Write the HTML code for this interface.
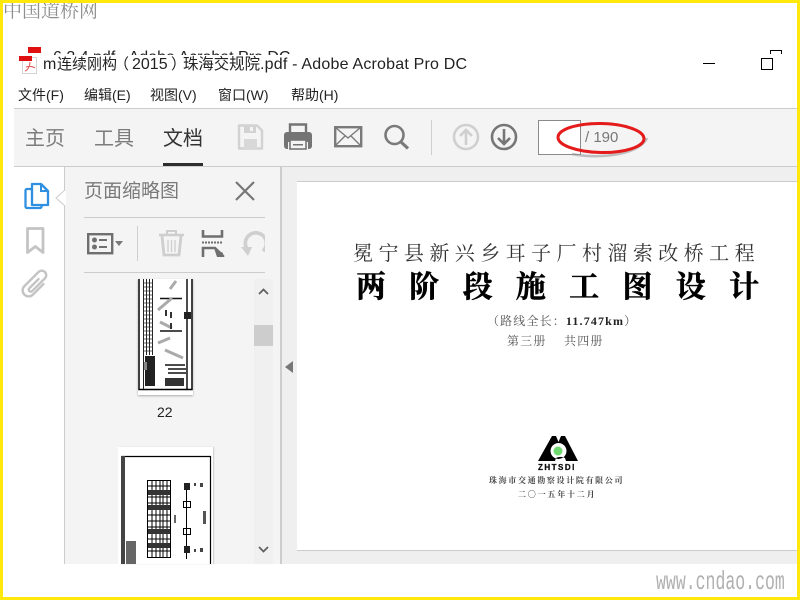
<!DOCTYPE html>
<html><head><meta charset="utf-8">
<style>
*{box-sizing:border-box}
html,body{margin:0;padding:0;width:800px;height:600px;overflow:hidden;background:#fff}
body{position:relative;font-family:"Liberation Sans","Noto Sans CJK SC",sans-serif;color:#222}
.a{position:absolute;white-space:nowrap;line-height:1}
.b{position:absolute}
svg{position:absolute;overflow:visible}
.s{font-family:"Liberation Serif","Noto Serif CJK SC",serif}
</style></head><body>
<!-- watermark -->
<div class="a s" style="left:3px;top:2px;font-size:19px;color:#8f8f8f">中国道桥网</div>
<!-- ghost title -->
<div class="a" style="left:53px;top:50px;font-size:16px;color:#222;height:5px;overflow:hidden;line-height:16px">6.3.4.pdf - Adobe Acrobat Pro DC</div>
<svg style="left:0;top:0" width="800" height="600">
<rect x="28" y="47" width="13" height="6" fill="#e01010"/>
<rect x="22.500" y="57.500" width="14" height="16" fill="#fff" stroke="#d4d4d4"/>
<rect x="19" y="56" width="13" height="5" fill="#e01010"/>
<path d="M30 62c0 4-2 8-5 9M26 67c3-1 6-1 9 1" stroke="#e05050" fill="none"/>
</svg>
<div class="a" style="left:43px;top:57px;font-size:16px;color:#222">m</div>
<div class="a" style="left:57px;top:57px;font-size:15px;color:#222">连续刚构</div>
<div class="a" style="left:114px;top:57px;font-size:15px;color:#222">（</div>
<div class="a" style="left:132px;top:57px;font-size:16px;color:#222">2015</div>
<div class="a" style="left:171px;top:57px;font-size:15px;color:#222">）</div>
<div class="a" style="left:183px;top:57px;font-size:15.400px;color:#222">珠海交规院</div>
<div class="a" style="left:260px;top:57px;font-size:16px;letter-spacing:.2px;color:#222">.pdf - Adobe Acrobat Pro DC</div>
<div class="b" style="left:703px;top:63px;width:12px;height:1px;background:#000"></div>
<div class="b" style="left:761px;top:58px;width:12px;height:12px;border:1px solid #000"></div>
<div class="b" style="left:770px;top:50px;width:12px;height:4px;border:1px solid #000;border-bottom:0"></div>
<div class="a" style="left:18px;top:88px;font-size:14px">文件(F)</div>
<div class="a" style="left:84px;top:88px;font-size:14px">编辑(E)</div>
<div class="a" style="left:150px;top:88px;font-size:14px">视图(V)</div>
<div class="a" style="left:218px;top:88px;font-size:14px">窗口(W)</div>
<div class="a" style="left:291px;top:88px;font-size:14px">帮助(H)</div>
<!-- toolbar -->
<div class="b" style="left:14px;top:108px;width:783px;height:59px;background:#f4f4f4;border-top:1px solid #ccc;border-bottom:1px solid #ccc"></div>
<div class="a" style="left:25px;top:129px;font-size:20px;color:#7c7c7c">主页</div>
<div class="a" style="left:94px;top:129px;font-size:20px;color:#7c7c7c">工具</div>
<div class="a" style="left:163px;top:129px;font-size:20px;color:#333">文档</div>
<div class="b" style="left:163px;top:163px;width:40px;height:3px;background:#2d2d2d"></div>
<svg style="left:0;top:0" width="800" height="600" fill="none">
<!-- save -->
<path d="M239 125.500h18l5 5v18h-23z" stroke="#d2d2d2" stroke-width="2.400" stroke-linejoin="round"/>
<rect x="244" y="126" width="12" height="7" fill="#d2d2d2"/>
<rect x="250" y="127" width="3" height="4" fill="#f4f4f4"/>
<rect x="244" y="139" width="13" height="10" fill="#d8d8d8"/>
<!-- print -->
<path d="M290 134v-9.500h16v9.500" stroke="#747474" stroke-width="2.400"/>
<path d="M287 132h22a3 3 0 0 1 3 3v11a3 3 0 0 1-3 3h-1v-7h-20v7h-1a3 3 0 0 1-3-3v-11a3 3 0 0 1 3-3z" fill="#747474"/>
<rect x="290" y="140" width="16" height="9" fill="#f4f4f4" stroke="#747474" stroke-width="1.600"/>
<rect x="293" y="144" width="10" height="1.500" fill="#747474"/>
<!-- mail -->
<rect x="335.200" y="127.200" width="26" height="19" stroke="#7a7a7a" stroke-width="2.400"/>
<path d="M336 128l12 10 12-10M336 145l9-9M360 145l-9-9" stroke="#7a7a7a" stroke-width="1.400"/>
<!-- search -->
<circle cx="394.500" cy="135" r="9" stroke="#7a7a7a" stroke-width="2.600"/>
<path d="M401 142l7 6.500" stroke="#7a7a7a" stroke-width="3.200"/>
<path d="M431.500 120v35" stroke="#cfcfcf"/>
<!-- up -->
<circle cx="466" cy="137" r="12" stroke="#cfcfcf" stroke-width="2.600"/>
<path d="M466 145v-15M460 136l6-6 6 6" stroke="#cfcfcf" stroke-width="2.600"/>
<!-- down -->
<circle cx="504" cy="137" r="12" stroke="#767676" stroke-width="2.600"/>
<path d="M504 129v15M498 138l6 6 6-6" stroke="#767676" stroke-width="2.600"/>
</svg>
<div class="b" style="left:538px;top:120px;width:43px;height:35px;background:#fff;border:1px solid #8a8a8a"></div>
<div class="a" style="left:585px;top:130px;font-size:15px;color:#777">/ 190</div>
<svg style="left:0;top:0" width="800" height="600" fill="none">
<path d="M572 154c20 4 52 3 68-8 4-3 6-5 7-8" stroke="#999" stroke-opacity=".6" stroke-width="2.500"/>
<ellipse cx="601" cy="138" rx="43" ry="14.500" stroke="#e51b1b" stroke-width="3" transform="rotate(1 601 138)"/>
</svg>
<!-- side panel -->
<div class="b" style="left:64px;top:167px;width:218px;height:397px;background:#f4f4f4;border-left:1px solid #ccc;border-right:2px solid #ccc"></div>
<div class="b" style="left:282px;top:167px;width:515px;height:397px;background:#efefef"></div>
<div class="b" style="left:297px;top:181px;width:500px;height:370px;background:#fff;border-top:1px solid #ccc"></div>
<div class="b" style="left:297px;top:550px;width:500px;height:1px;background:#ccc"></div>
<svg style="left:0;top:0" width="800" height="600" fill="none">
<!-- notch -->
<path d="M65 190l-9 8 9 8" fill="#fff" stroke="#ccc"/><path d="M65 191v14" stroke="#fff" stroke-width="2"/>
<!-- pages icon -->
<path d="M31 189h-4a1.500 1.500 0 0 0-1.500 1.500v16a1.500 1.500 0 0 0 1.500 1.500h13a1.500 1.500 0 0 0 1.500-1.500v-1" stroke="#2f8fe0" stroke-width="2.300"/>
<path d="M32 184h9l7 7v14h-16z" stroke="#2f8fe0" stroke-width="2.300" stroke-linejoin="round"/>
<path d="M41 184v7h7" stroke="#2f8fe0" stroke-width="2"/>
<!-- bookmark -->
<path d="M27.500 228.500h15.500v24l-7.700-6-7.800 6z" stroke="#c4c4c4" stroke-width="2.800" stroke-linejoin="round"/>
<!-- clip -->
<path transform="rotate(45 35 284)" d="M41 278V293A6 6 0 0 1 29 293V273A4.500 4.500 0 0 1 38 273V291A2 2 0 0 1 34 291V278" stroke="#c4c4c4" stroke-width="2.400" stroke-linecap="round"/>
<!-- close -->
<path d="M236 182l18 18M254 182l-18 18" stroke="#777" stroke-width="2.200"/>
<!-- options -->
<rect x="88.200" y="234.200" width="24" height="19" stroke="#6f6f6f" stroke-width="2.400"/>
<circle cx="94.500" cy="240" r="2.500" fill="#6f6f6f"/><circle cx="94.500" cy="247" r="2.500" fill="#6f6f6f"/>
<path d="M99 240h8M99 247h8" stroke="#6f6f6f" stroke-width="2"/>
<path d="M115 241h8l-4 5z" fill="#777"/>
<path d="M137.500 226v35" stroke="#cfcfcf"/>
<!-- trash -->
<path d="M159 235h25" stroke="#cecece" stroke-width="2.400"/>
<path d="M167 235v-4h9v4" stroke="#cecece" stroke-width="2"/>
<path d="M162 236l2 19h15l2-19" stroke="#cecece" stroke-width="2.800"/>
<path d="M168 240v12M171.500 240v12M175 240v12" stroke="#cecece" stroke-width="1.300"/>
<!-- extract -->
<path d="M203 230v6.500h19v-6.500" stroke="#6f6f6f" stroke-width="2.600"/>
<path d="M202 242.500h21" stroke="#6f6f6f" stroke-width="2" stroke-dasharray="2 1"/>
<path d="M203 257v-9h12l8 8v1" stroke="#6f6f6f" stroke-width="2.600"/>
<path d="M214 248l9 5v4h-6z" fill="#6f6f6f"/>
<!-- rotate -->
<path d="M247 249a10.500 10.500 0 1 1 16 2" stroke="#cfcfcf" stroke-width="3.600"/>
<path d="M241 247h11l-4 9z" fill="#cfcfcf"/>
<rect x="265" y="225" width="5" height="36" fill="#f4f4f4"/>
</svg>
<div class="a" style="left:84px;top:182px;font-size:19px;color:#7a7a7a">页面缩略图</div>
<div class="b" style="left:84px;top:217px;width:181px;height:1px;background:#ccc"></div>
<div class="b" style="left:84px;top:272px;width:181px;height:1px;background:#ccc"></div>
<!-- thumbnails -->
<div class="b" style="left:138px;top:279px;width:55px;height:116px;background:#fff;box-shadow:0 1px 2px #aaa"></div>
<div class="b" style="left:118px;top:447px;width:95px;height:117px;background:#fff;box-shadow:1px 0 1px #ccc"></div>
<svg style="left:0;top:0" width="800" height="600" fill="none">
<path d="M139 279v110.500h53V279" stroke="#000" stroke-width="1.500"/>
<path d="M143.500 279v110M152.500 279v76M146.500 279v76M149.500 279v76" stroke="#222" stroke-width="1"/>
<path d="M143 283h10M143 287h10M143 291h10M143 295h10M143 299h10M143 303h10M143 307h10M143 311h10M143 315h10M143 319h10M143 323h10M143 327h10M143 331h10M143 335h10M143 339h10M143 343h10M143 347h10M143 351h10" stroke="#333" stroke-width=".8"/>
<path d="M187 279v110" stroke="#111" stroke-width="1.500"/>
<path d="M160 298.500h22M160 331h22M165 365h20M168 369h18M168 373h18" stroke="#111" stroke-width="1.500"/>
<path d="M176 281l-6 8M158 310l14-12M158 343l12-5M165 350l18 8M160 322l12 6" stroke="#aaa" stroke-width="3"/>
<rect x="145" y="356" width="10" height="30" fill="#222"/>
<rect x="144" y="362" width="3" height="8" fill="#888"/>
<rect x="165" y="378" width="19" height="8" fill="#333"/>
<rect x="184" y="312" width="7" height="7" fill="#222"/>
<rect x="165" y="310" width="2" height="6" fill="#333"/>
<rect x="170" y="312" width="2" height="6" fill="#333"/>
<rect x="170" y="323" width="2" height="6" fill="#333"/>
<!-- thumb 2 -->
<path d="M122 564V456.500h88.500v107.500" stroke="#000" stroke-width="1.200"/>
<rect x="121" y="456" width="4" height="108" fill="#444"/>
<rect x="126" y="541" width="10" height="23" fill="#666"/>
<rect x="147.500" y="480.500" width="23" height="77" fill="#fff" stroke="#000"/>
<path d="M147 486h24M147 491h24M147 497h24M147 503h24M147 509h24M147 515h24M147 521h24M147 527h24M147 533h24M147 539h24M147 545h24M147 551h24" stroke="#000" stroke-width="1"/>
<path d="M152 480v77M156 480v77M160 480v77M163 480v77M167 480v77" stroke="#000" stroke-width="1"/>
<rect x="148" y="490" width="22" height="5" fill="#333"/>
<rect x="148" y="505" width="22" height="5" fill="#333"/>
<rect x="148" y="529" width="22" height="5" fill="#333"/>
<rect x="148" y="543" width="22" height="5" fill="#333"/>
<path d="M186.500 484v75" stroke="#000"/>
<rect x="184" y="483" width="6" height="7" fill="#222"/><rect x="184" y="546" width="6" height="7" fill="#222"/>
<rect x="183.500" y="501.500" width="7" height="6" stroke="#000"/><rect x="183.500" y="528.500" width="7" height="6" stroke="#000"/>
<rect x="174" y="515" width="2" height="8" fill="#666"/><rect x="203" y="511" width="3" height="13" fill="#555"/>
<rect x="194" y="483" width="2" height="3" fill="#444"/><rect x="200" y="483" width="3" height="4" fill="#444"/>
<rect x="194" y="549" width="2" height="3" fill="#444"/><rect x="200" y="548" width="3" height="4" fill="#444"/>
</svg>
<div class="a" style="left:157px;top:405px;font-size:14px;color:#222">22</div>
<!-- scrollbar -->
<div class="b" style="left:254px;top:279px;width:19px;height:285px;background:#f0f0f0"></div>
<div class="b" style="left:254px;top:325px;width:19px;height:21px;background:#cdcdcd"></div>
<svg style="left:0;top:0" width="800" height="600" fill="none">
<path d="M259 294l4.500-4.500 4.500 4.500M259 547l4.500 4.500 4.500-4.500" stroke="#606060" stroke-width="1.800"/>
<path d="M293 361l-8 6 8 6z" fill="#777"/>
<!-- logo -->
<path fill-rule="evenodd" d="M552 436h4l2.500 6 2.500-6h4l13 25h-12l-1-3c-3-1.500-6-1.500-9 0l-1 3h-17zM558.500 443a8 8 0 1 0 .01 0z" fill="#000"/>
<circle cx="558" cy="451" r="4.500" fill="#6fd86f"/>
</svg>
<!-- document -->
<div class="a s" style="left:353px;top:244px;font-size:20px;letter-spacing:5.440px;color:#333">冕宁县新兴乡耳子厂村溜索改桥工程</div>
<div class="a s" style="left:356px;top:273px;font-size:30px;font-weight:700;letter-spacing:23.300px;color:#000;-webkit-text-stroke:.5px #000">两阶段施工图设计</div>
<div class="a s" style="left:487px;top:315px;font-size:12px;letter-spacing:1.150px;color:#555">（路线全长：<b style="color:#222">11.747km</b>）</div>
<div class="a s" style="left:507px;top:335px;font-size:12px;letter-spacing:1.200px;color:#555">第三册　 共四册</div>
<div class="a" style="left:538px;top:464px;font-size:8px;font-weight:700;letter-spacing:1.500px;color:#111;-webkit-text-stroke:.3px #111">ZHTSDI</div>
<div class="a s" style="left:489px;top:477px;font-size:8px;font-weight:700;letter-spacing:1.650px;color:#444">珠海市交通勘察设计院有限公司</div>
<div class="a s" style="left:518px;top:491px;font-size:8px;font-weight:700;letter-spacing:1.800px;color:#444">二〇一五年十二月</div>
<div class="a" style="left:656px;top:569px;font-family:'Liberation Mono',monospace;font-size:26px;color:#b0b0b0;transform:scaleX(.635);transform-origin:0 0">www.cndao.com</div>
<!-- yellow border -->
<div class="b" style="left:0;top:0;width:800px;height:3px;background:#ffe80a"></div>
<div class="b" style="left:0;top:597px;width:800px;height:3px;background:#ffe80a"></div>
<div class="b" style="left:0;top:0;width:3px;height:600px;background:#ffe80a"></div>
<div class="b" style="left:797px;top:0;width:3px;height:600px;background:#ffe80a"></div>
</body></html>
